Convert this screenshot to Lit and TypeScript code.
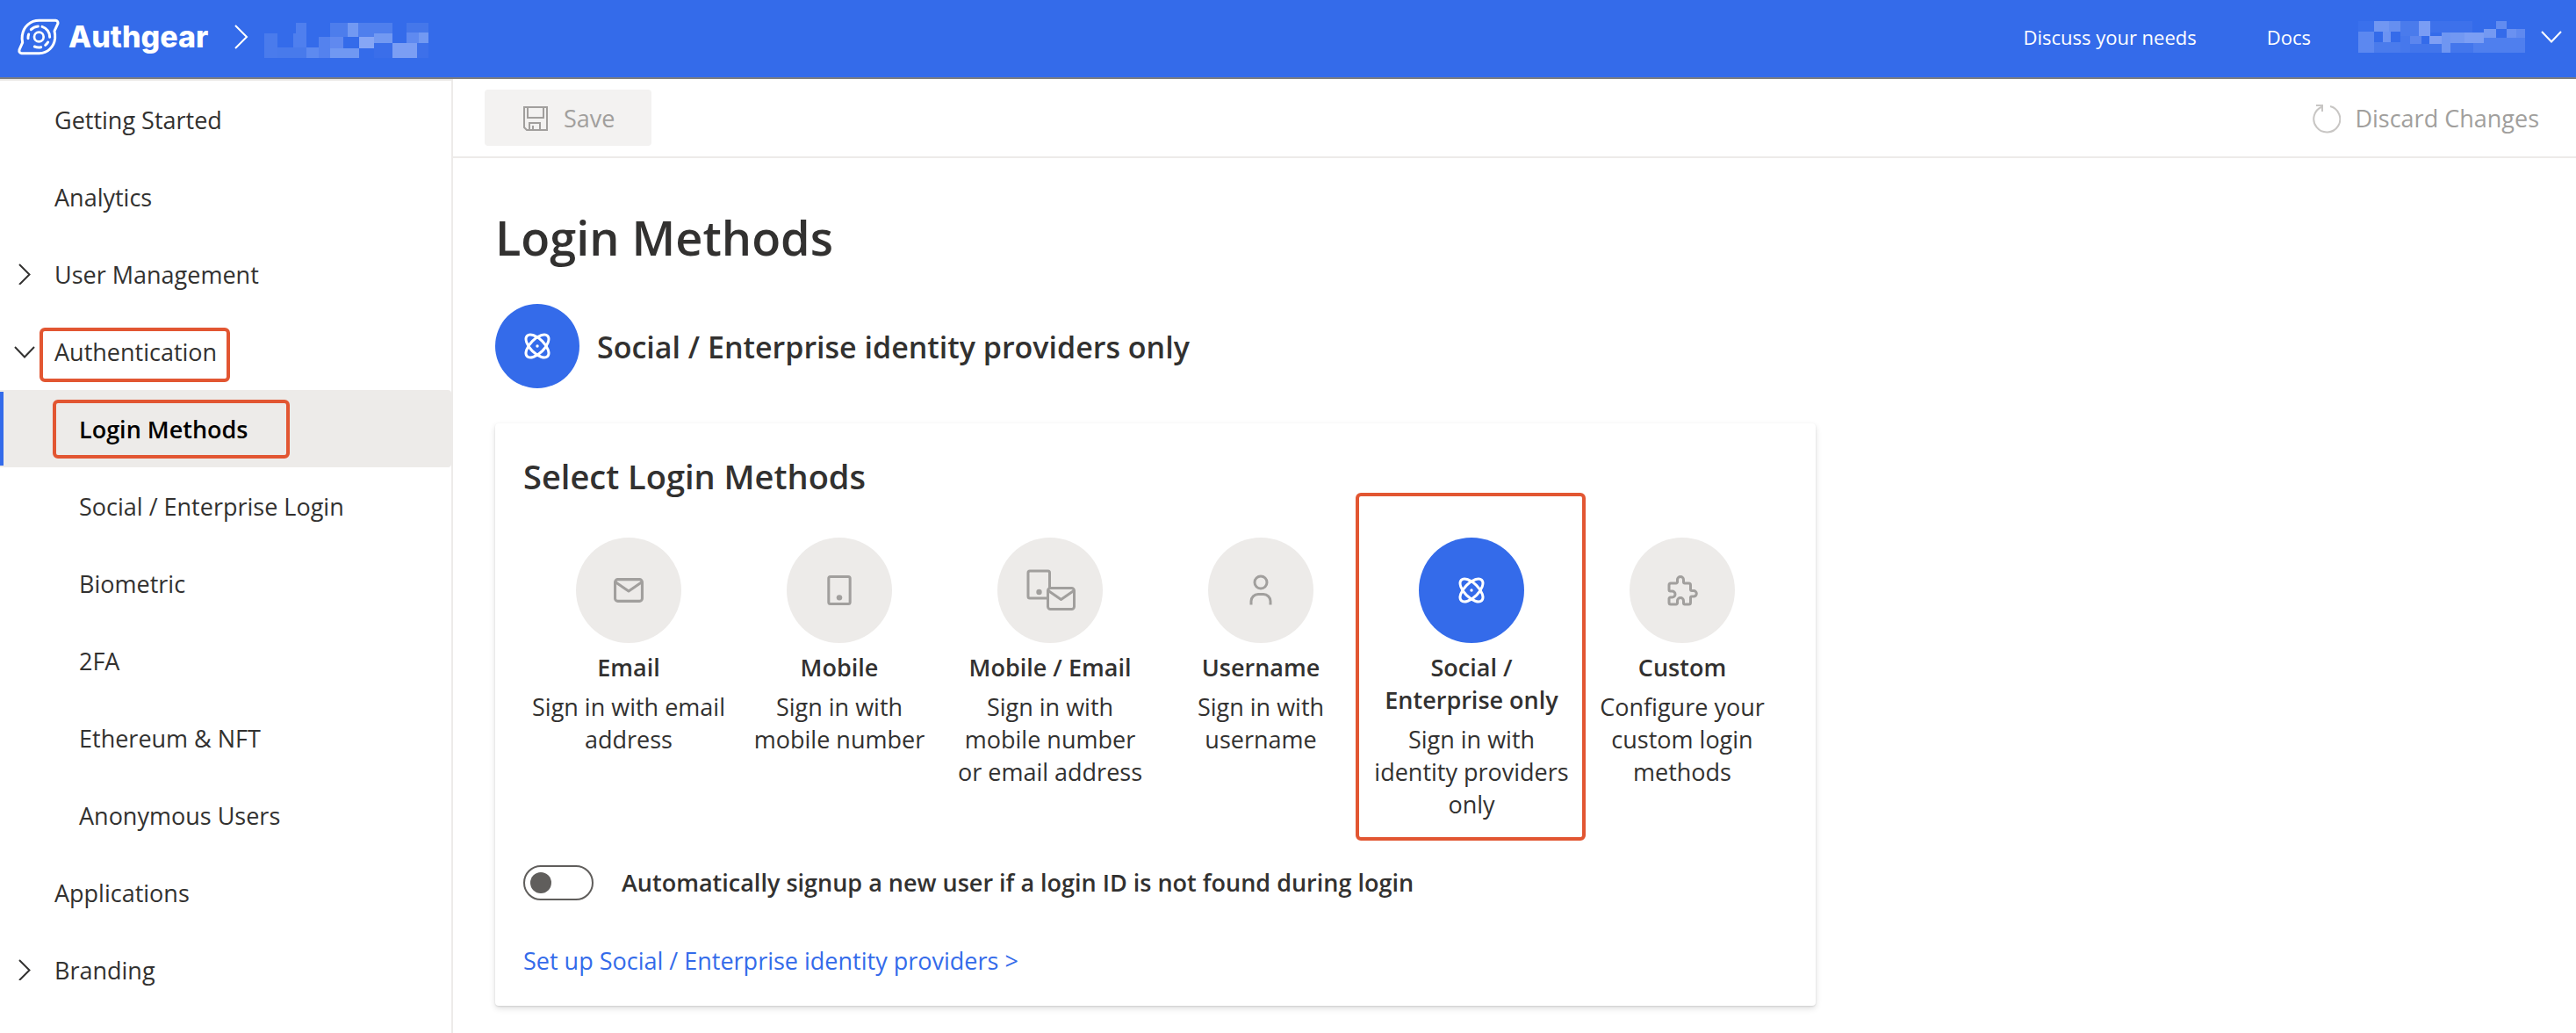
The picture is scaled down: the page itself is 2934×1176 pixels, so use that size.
import { LitElement, html, svg, css, nothing } from "lit";
import { customElement, state } from "lit/decorators.js";
import { classMap } from "lit/directives/class-map.js";

interface NavItem {
  label: string;
  child?: boolean;
  chevron?: "right" | "down";
  marked?: boolean;
}

const NAV: NavItem[] = [
  { label: "Getting Started" },
  { label: "Analytics" },
  { label: "User Management", chevron: "right" },
  { label: "Authentication", chevron: "down", marked: true },
  { label: "Login Methods", child: true, marked: true },
  { label: "Social / Enterprise Login", child: true },
  { label: "Biometric", child: true },
  { label: "2FA", child: true },
  { label: "Ethereum & NFT", child: true },
  { label: "Anonymous Users", child: true },
  { label: "Applications" },
  { label: "Branding", chevron: "right" },
];

const envelope = svg`
  <rect x="1.5" y="1.5" width="30" height="24" rx="3"/>
  <path d="M2 4.5 16.5 14.5 31 4.5"/>`;

const phone = svg`
  <rect x="1.5" y="1.5" width="24" height="30.5" rx="2"/>
  <circle cx="13.5" cy="25" r="3.2" fill="currentColor" stroke="none"/>`;

const atom = svg`
  <ellipse cx="15" cy="15" rx="16.5" ry="8" transform="rotate(45 15 15)"/>
  <ellipse cx="15" cy="15" rx="16.5" ry="8" transform="rotate(-45 15 15)"/>
  <circle cx="15" cy="15" r="1.7" fill="currentColor" stroke="none"/>`;

const icons: Record<string, unknown> = {
  email: html`<svg class="glyph" width="34" height="28" viewBox="0 0 33 27">${envelope}</svg>`,
  mobile: html`<svg class="glyph" width="28" height="34" viewBox="0 0 27 33.5">${phone}</svg>`,
  both: html`<svg class="glyph" width="56" height="48" viewBox="-2 0 56 48">
    <path d="M22 33H3a2 2 0 0 1-2-2V4a2 2 0 0 1 2-2h20.500a2 2 0 0 1 2 2v18"/>
    <circle cx="13.500" cy="26" r="3.200" fill="currentColor" stroke="none"/>
    <g transform="translate(22 20)">${envelope}</g>
  </svg>`,
  user: html`<svg class="glyph" width="26" height="36" viewBox="0 0 26 36">
    <circle cx="13" cy="9" r="7"/>
    <path d="M2 34.500v-4a8 8 0 0 1 8-8h6a8 8 0 0 1 8 8v4"/>
  </svg>`,
  social: html`<svg class="glyph" width="30" height="30" viewBox="0 0 30 30">${atom}</svg>`,
  custom: html`<svg class="glyph" width="36" height="36" viewBox="0 0 36 36">
    <path d="M5 10h6a1.500 1.500 0 0 0 1.500-1.500V6a3.500 3.500 0 0 1 7 0v2.500a1.500 1.500 0 0 0 1.500 1.500h4.500a2 2 0 0 1 2 2v5a1.500 1.500 0 0 0 1.500 1.500H31a3.300 3.300 0 0 1 0 6.600h-2a1.500 1.500 0 0 0-1.500 1.500V32a2 2 0 0 1-2 2H21a1.500 1.500 0 0 1-1.500-1.500V30a3.500 3.500 0 0 0-7 0v2.500A1.500 1.500 0 0 1 11 34H5a2 2 0 0 1-2-2v-4.500A1.500 1.500 0 0 1 4.500 26H6.500a3.500 3.500 0 0 0 0-7H4.500A1.500 1.500 0 0 1 3 17.500V12a2 2 0 0 1 2-2z"/>
  </svg>`,
};

interface Method {
  id: string;
  title: string;
  text: string;
}

const METHODS: Method[] = [
  { id: "email", title: "Email", text: "Sign in with email address" },
  { id: "mobile", title: "Mobile", text: "Sign in with mobile number" },
  { id: "both", title: "Mobile / Email", text: "Sign in with mobile number or email address" },
  { id: "user", title: "Username", text: "Sign in with username" },
  { id: "social", title: "Social / Enterprise only", text: "Sign in with identity providers only" },
  { id: "custom", title: "Custom", text: "Configure your custom login methods" },
];

type Tile = [number, number, number, number, string];

const PROJECT_TILES: Tile[] = [
  [0, 36, 45, 84, "#4a7bec"], [45, 84, 99, 36, "#487aeb"], [108, 0, 36, 36, "#4f7fee"],
  [99, 36, 45, 48, "#4f7fee"], [144, 84, 42, 36, "#5d8af0"], [186, 48, 39, 72, "#5482ee"],
  [225, 0, 60, 48, "#4d7dec"], [225, 48, 45, 39, "#6089ef"], [225, 87, 99, 33, "#7098f2"],
  [285, 0, 36, 48, "#7299f2"], [321, 0, 117, 36, "#4f7fed"], [321, 36, 54, 12, "#4f7fed"],
  [324, 48, 51, 39, "#86a6f5"], [375, 36, 63, 33, "#7299f2"], [375, 69, 63, 51, "#3a6eea"],
  [438, 69, 84, 51, "#7b9ef4"], [486, 0, 75, 33, "#4577ea"], [486, 33, 42, 36, "#5f8af0"],
  [528, 33, 33, 36, "#7299f2"], [522, 69, 39, 51, "#3d70ea"],
];

const ACCOUNT_TILES: Tile[] = [
  [0, 0, 42, 36, "#3a70ec"], [0, 36, 42, 72, "#5c88f0"], [42, 0, 40, 36, "#7197f2"],
  [82, 0, 30, 36, "#668ff0"], [66, 36, 20, 36, "#6c93f2"], [42, 72, 70, 36, "#4a7bec"],
  [112, 0, 50, 51, "#4a7bec"], [112, 51, 26, 57, "#4678ec"], [138, 51, 30, 27, "#5c86ee"],
  [138, 78, 83, 30, "#4275eb"], [161, 0, 30, 51, "#7a9df4"], [191, 0, 112, 39, "#3d71eb"],
  [189, 51, 32, 27, "#7f9ff4"], [221, 39, 24, 69, "#6f96f2"], [245, 39, 37, 36, "#7298f2"],
  [282, 39, 51, 36, "#7b9ef4"], [245, 75, 60, 33, "#4376ec"], [305, 75, 28, 33, "#4f7fee"],
  [333, 27, 33, 30, "#7499f2"], [366, 0, 28, 27, "#628cf0"], [394, 27, 25, 30, "#6a91f1"],
  [419, 27, 23, 30, "#5f89ef"], [333, 57, 109, 51, "#4f7fee"],
];

const tiles = (list: Tile[]) =>
  list.map(([x, y, w, h, c]) => svg`<rect x=${x} y=${y} width=${w} height=${h} fill=${c}/>`);

@customElement("app-root")
export class AppRoot extends LitElement {
  @state() private current = "Login Methods";
  @state() private method = "social";

  static styles = css`
    :host {
      display: flex;
      flex-direction: column;
      min-height: 100vh;
      background: #fff;
      color: #323130;
      font: 400 27px/38px "Open Sans", "Noto Sans", sans-serif;
    }
    * { box-sizing: border-box; }
    h1, h2, p { margin: 0; font-weight: 600; }
    a { color: inherit; text-decoration: none; }
    button { font: inherit; color: inherit; background: none; border: 0; padding: 0; cursor: pointer; }
    svg { display: block; flex: none; }
    .line { fill: none; stroke: currentColor; stroke-width: 2; }
    .glyph { fill: none; stroke: currentColor; stroke-width: 3; stroke-linejoin: round; overflow: visible; }

    .topbar {
      display: flex;
      align-items: center;
      height: 90px;
      padding: 0 16px 4px 20px;
      background: #346bea;
      border-bottom: 2px solid #7f7f7f;
      color: #fff;
      font-size: 22px;
    }
    .brand {
      display: flex;
      align-items: center;
      gap: 10px;
      font: 800 34px/40px Inter, sans-serif;
    }
    .crumb { margin: 0 18px 0 30px; }
    .project { margin-top: 8px; }
    .links { display: flex; align-items: center; margin-left: auto; gap: 80px; }
    .account { display: flex; align-items: center; gap: 18px; margin-left: -26px; }

    .body { display: flex; flex: 1; }
    .sidebar {
      flex: none;
      width: 516px;
      border: 2px solid #edebe9;
      border-width: 2px 2px 0 0;
    }
    .list { list-style: none; margin: 0; padding: 0; }
    .item {
      position: relative;
      display: flex;
      align-items: center;
      height: 88px;
      padding: 2px 0 0 62px;
    }
    .item.child { padding-left: 90px; }
    .item.on {
      background: #edebe9;
      border-radius: 0 4px 4px 0;
      color: #000;
      font-weight: 600;
    }
    .item.on::before {
      content: "";
      position: absolute;
      inset: 2px auto 2px 0;
      width: 4px;
      background: #346bea;
    }
    .arrow { position: absolute; left: 16px; top: 32px; }
    .mark {
      position: absolute;
      border: 4px solid #e25632;
      border-radius: 6px;
      pointer-events: none;
    }
    .item .mark { inset: 17px 252px 9px 45px; }
    .item.child .mark { inset: 11px 184px 10px 60px; }

    .main { flex: 1; min-width: 0; }
    .commands {
      display: flex;
      align-items: center;
      justify-content: space-between;
      height: 90px;
      padding: 0 42px 0 36px;
      border-bottom: 2px solid #edebe9;
      color: #a19f9d;
    }
    .save {
      display: flex;
      align-items: center;
      gap: 18px;
      height: 64px;
      padding: 2px 42px 0 44px;
      background: #f3f2f1;
      border-radius: 4px;
      color: #a19f9d;
    }
    .discard { display: flex; align-items: center; gap: 16px; padding-top: 2px; color: #a19f9d; }
    .discard svg { color: #c8c6c4; }

    .content { padding: 54px 48px 32px; }
    .title { font-size: 54px; line-height: 72px; }
    .current { display: flex; align-items: center; gap: 20px; margin-top: 40px; }
    .name { padding-top: 2px; font-size: 34px; line-height: 48px; }
    .disc {
      display: grid;
      place-items: center;
      width: 120px;
      height: 120px;
      border-radius: 50%;
      background: #edebe9;
      color: #a19f9d;
    }
    .disc.small { width: 96px; height: 96px; }
    .disc.blue { background: #346bea; color: #fff; }

    .card {
      max-width: 1504px;
      margin-top: 40px;
      padding: 32px;
      background: #fff;
      border-radius: 4px;
      box-shadow: 0 3px 7px rgba(0, 0, 0, 0.13), 0 1px 2px rgba(0, 0, 0, 0.11);
    }
    .subtitle { font-size: 38px; line-height: 56px; }
    .methods { display: grid; grid-template-columns: repeat(6, 1fr); margin-top: 42px; }
    .method {
      position: relative;
      display: flex;
      flex-direction: column;
      align-items: center;
      padding: 0 8px;
      line-height: 37px;
      text-align: center;
    }
    .label { margin-top: 9px; font-weight: 600; }
    .about { margin-top: 8px; }
    .method .mark { inset: -51px -10px -23px -12px; }

    .auto { display: flex; align-items: center; gap: 32px; margin-top: 51px; font-weight: 600; }
    .toggle {
      appearance: none;
      display: flex;
      align-items: center;
      width: 80px;
      height: 40px;
      margin: 0;
      padding: 0 6px;
      border: 2px solid #605e5c;
      border-radius: 20px;
      background: #fff;
    }
    .toggle::before {
      content: "";
      width: 24px;
      height: 24px;
      border-radius: 50%;
      background: #605e5c;
    }
    .toggle:checked { justify-content: flex-end; }
    .setup { display: inline-block; margin-top: 50px; color: #346bea; }
  `;

  private nav(item: NavItem) {
    const on = item.label === this.current;
    return html`<li>
      <a
        href="#"
        class=${classMap({ item: true, child: !!item.child, on })}
        aria-current=${on ? "page" : nothing}
        @click=${(e: Event) => { e.preventDefault(); this.current = item.label; }}
      >
        ${item.chevron
          ? html`<svg class="arrow line" width="24" height="24" viewBox="0 0 24 24" aria-hidden="true">
              <path d=${item.chevron === "right" ? "M6 1 17.5 12.5 6 24" : "M1 7 12 18.5 23 7"} />
            </svg>`
          : nothing}
        ${item.label}
        ${item.marked ? html`<span class="mark"></span>` : nothing}
      </a>
    </li>`;
  }

  private option(m: Method) {
    const on = m.id === this.method;
    return html`<button
      type="button"
      class="method"
      aria-pressed=${on ? "true" : "false"}
      @click=${() => { this.method = m.id; }}
    >
      <span class=${classMap({ disc: true, blue: on })}>${icons[m.id]}</span>
      <span class="label">${m.title}</span>
      <span class="about">${m.text}</span>
      ${m.id === "social" ? html`<span class="mark"></span>` : nothing}
    </button>`;
  }

  render() {
    return html`
      <header class="topbar">
        <a class="brand" href="#">
          <svg width="48" height="42" viewBox="0 0 144 126" fill="none" stroke="#fff" stroke-width="9" stroke-linecap="round" aria-hidden="true">
            <path d="M74 7H130Q139 8 138 17L126 43Q129 55 128 68C125 97 103 119 74 119H14Q4 118 6 107L17 82Q14 70 16 58C20 28 43 7 74 7Z" stroke-linejoin="round"/>
            <circle cx="73" cy="63" r="16" stroke-width="8"/>
            <path d="M46 38A37 37 0 0 1 70 27M84 28A37 37 0 0 1 110 64M104 81A37 37 0 0 1 95 91M80 98A37 37 0 0 1 58 96M36 68A37 37 0 0 1 38 54"/>
          </svg>
          <span>Authgear</span>
        </a>
        <svg class="crumb line" width="16" height="30" viewBox="0 0 16 30" aria-hidden="true"><path d="M1 2 14 15 1 28"/></svg>
        <svg class="project" width="187" height="40" viewBox="0 0 561 120" preserveAspectRatio="none" shape-rendering="crispEdges" aria-hidden="true">${tiles(PROJECT_TILES)}</svg>
        <nav class="links">
          <a href="#">Discuss your needs</a>
          <a href="#">Docs</a>
          <button class="account" type="button" aria-label="Account">
            <svg width="190" height="36" viewBox="0 0 442 108" preserveAspectRatio="none" shape-rendering="crispEdges" aria-hidden="true">${tiles(ACCOUNT_TILES)}</svg>
            <svg class="line" width="24" height="16" viewBox="0 0 24 16" aria-hidden="true"><path d="M1 2 12 13.500 23 2"/></svg>
          </button>
        </nav>
      </header>
      <div class="body">
        <nav class="sidebar"><ul class="list">${NAV.map((i) => this.nav(i))}</ul></nav>
        <main class="main">
          <div class="commands">
            <button class="save" type="button" disabled>
              <svg class="line" width="28" height="28" viewBox="0 0 28 28" aria-hidden="true">
                <path d="M1 1H27V27H4L1 24ZM5 1V13H23V1M7 27V19H19V27M11 27V22"/>
              </svg>
              Save
            </button>
            <button class="discard" type="button" disabled>
              <svg class="line" width="32" height="34" viewBox="0 0 32 34" aria-hidden="true">
                <path d="M20 3A15 15 0 1 1 11 3.500M4 2H11V9" />
              </svg>
              Discard Changes
            </button>
          </div>
          <div class="content">
            <h1 class="title">Login Methods</h1>
            <div class="current">
              <span class="disc small blue">${icons.social}</span>
              <p class="name">Social / Enterprise identity providers only</p>
            </div>
            <section class="card">
              <h2 class="subtitle">Select Login Methods</h2>
              <div class="methods">${METHODS.map((m) => this.option(m))}</div>
              <div class="auto">
                <input class="toggle" id="auto-signup" type="checkbox" role="switch" />
                <label for="auto-signup">Automatically signup a new user if a login ID is not found during login</label>
              </div>
              <a class="setup" href="#">Set up Social / Enterprise identity providers &gt;</a>
            </section>
          </div>
        </main>
      </div>
    `;
  }
}
